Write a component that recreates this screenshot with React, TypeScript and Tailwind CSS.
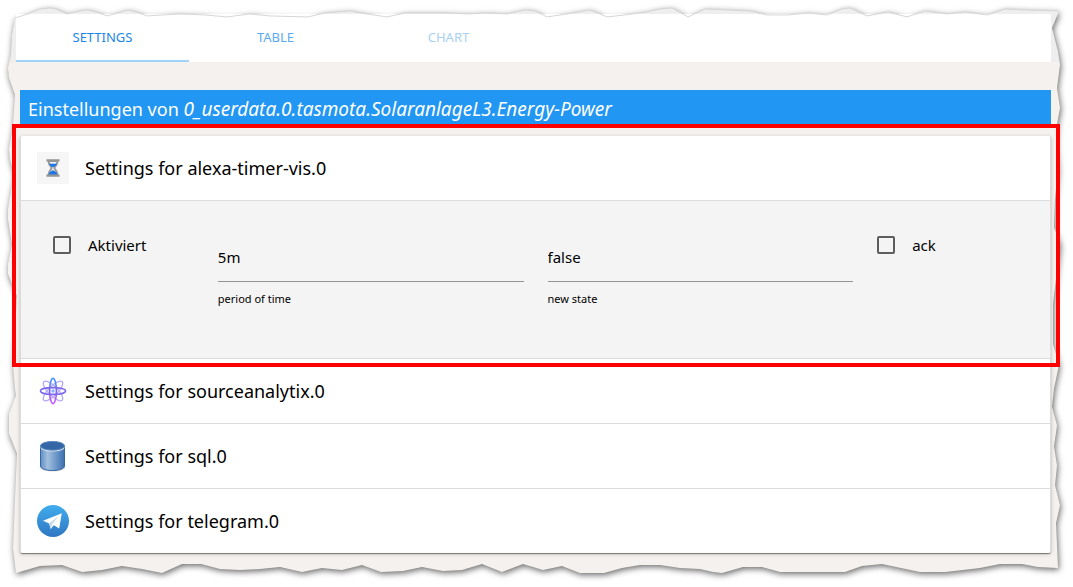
import React, { useState } from 'react';

const TOP_EDGE =
  '15,18 28,14 40,9 50,8 56,9 67,14 80,11 88,10 96,12 107,16 118,13 128,10 136,12 147,16 180,14 205,15 227,17 250,14 270,16 308,17 325,13 350,11 360,13 387,17 405,13 445,13 468,14 487,13 507,14 525,10 535,11 547,17 567,14 590,10 607,17 625,15 647,12 660,9 672,8 688,17 705,9 750,11 767,15 788,15 808,13 827,15 842,9 850,8 867,16 888,12 907,17 925,11 947,14 965,12 987,15 1005,9 1025,10 1059,11';
const RIGHT_EDGE =
  '1052,28 1058,52 1060,65 1057,88 1060,108 1057,125 1056,145 1058,170 1055,200 1054,228 1060,245 1056,280 1053,305 1053,345 1059,366 1054,390 1052,408 1057,427 1054,448 1057,467 1055,487 1060,507 1056,525 1058,570';
const BOTTOM_EDGE =
  '1038,569 1022,566 1000,566 980,570 945,574 920,574 882,566 862,568 845,574 780,574 762,569 743,569 722,575 713,574 700,571 680,570 660,567 640,567 622,570 604,575 580,575 562,568 543,572 523,566 502,574 482,566 462,572 443,573 422,569 403,573 381,574 362,567 342,572 322,570 302,574 280,569 260,571 240,572 220,571 201,566 182,566 162,575 142,571 122,568 102,572 82,574 62,567 40,568 16,575';
const LEFT_EDGE =
  '13,550 15,500 17,455 9,435 9,415 16,397 15,390 13,366 17,297 8,275 8,265 12,245 8,220 8,210 14,175 10,160 9,150 13,125 15,95 9,78 8,68 11,55 12,35';

function TornPaper() {
  return (
    <svg
      className="absolute inset-0 h-full w-full drop-shadow-[1px_2px_3px_rgba(0,0,0,0.6)]"
      viewBox="0 0 1073 587"
      preserveAspectRatio="none"
      aria-hidden="true"
    >
      <defs>
        <linearGradient id="paper" x1="0" y1="0" x2="0" y2="587" gradientUnits="userSpaceOnUse">
          <stop offset="0.1056" stopColor="#eeeeee" />
          <stop offset="0.1056" stopColor="#f5f1ee" />
        </linearGradient>
      </defs>
      <polygon
        points={`${TOP_EDGE} ${RIGHT_EDGE} ${BOTTOM_EDGE} ${LEFT_EDGE}`}
        fill="url(#paper)"
      />
    </svg>
  );
}

function TornTopEdge() {
  return (
    <svg
      className="pointer-events-none absolute inset-0 h-full w-full"
      viewBox="0 0 1073 587"
      preserveAspectRatio="none"
      aria-hidden="true"
    >
      <polyline points={TOP_EDGE} fill="none" stroke="#d6d6d6" />
    </svg>
  );
}

function HourglassIcon() {
  return (
    <svg viewBox="0 0 32 32" className="size-8 shrink-0" aria-hidden="true">
      <rect width="32" height="32" fill="#f6f6f6" />
      <path d="M11.5 9C11.5 13 14.5 14.5 14.5 16S11.5 19 11.5 23H20.5C20.5 19 17.5 17.5 17.5 16S20.5 13 20.5 9Z" fill="#e9eef5" stroke="#9a9a9a" strokeWidth="2" />
      <path d="M12 11.8H20C19.300 13.6 17.5 14.4 16 15.6C14.5 14.4 12.700 13.6 12 11.8Z" fill="#1b76e8" />
      <path d="M11.500 22.8C12 20 14 19.2 16 18.2C18 19.2 20 20 20.500 22.8Z" fill="#1b76e8" />
      <path d="M9.5 8.4H22.5M9.5 23.6H22.5" stroke="#949494" strokeWidth="2.2" />
    </svg>
  );
}

function AtomIcon() {
  return (
    <svg viewBox="0 0 32 32" className="size-8 shrink-0" fill="none" aria-hidden="true">
      <defs>
        <linearGradient id="atom" x1="0" y1="3" x2="0" y2="29" gradientUnits="userSpaceOnUse">
          <stop stopColor="#4a9dff" />
          <stop offset="0.5" stopColor="#7a62f0" />
          <stop offset="1" stopColor="#cf5cff" />
        </linearGradient>
      </defs>
      <g stroke="url(#atom)">
        <g opacity="0.55" strokeWidth="1.3">
          <ellipse cx="16" cy="16" rx="13" ry="4.600" transform="rotate(45 16 16)" />
          <ellipse cx="16" cy="16" rx="13" ry="4.600" transform="rotate(-45 16 16)" />
        </g>
        <ellipse cx="16" cy="16" rx="3.4" ry="12.6" strokeWidth="1.6" />
        <path
          d="M3.400 16C3.400 14 9 12.600 16 12.600S28.600 14 28.600 16S23 19.400 16 19.400S3.400 18 3.400 16Z"
          stroke="#7e68ef"
          strokeWidth="1.6"
        />
      </g>
      <circle cx="16" cy="16" r="1.8" fill="#8ab4ff" />
    </svg>
  );
}

function DatabaseIcon() {
  return (
    <svg viewBox="0 0 32 32" className="size-8 shrink-0" aria-hidden="true">
      <defs>
        <linearGradient id="cylinder">
          <stop stopColor="#5f8fc4" />
          <stop offset="0.3" stopColor="#a3bfde" />
          <stop offset="0.65" stopColor="#6c98c9" />
          <stop offset="1" stopColor="#3d70ad" />
        </linearGradient>
      </defs>
      <ellipse cx="15.5" cy="27.5" rx="13" ry="4" fill="#000000" opacity="0.12" />
      <path d="M3.5 6V26C3.5 28.5 8.5 30.5 15.5 30.5S27.5 28.5 27.5 26V6Z" fill="url(#cylinder)" stroke="#3567a5" />
      <path d="M3.8 6.5C4 9.5 9 11 15.5 11S27 9.5 27.2 6.5" fill="none" stroke="#dbe7f4" strokeWidth="1.2" />
      <ellipse cx="15.5" cy="5.8" rx="12" ry="4.3" fill="#3465a4" stroke="#5583bd" />
    </svg>
  );
}

function TelegramIcon() {
  return (
    <svg viewBox="0 0 32 32" className="size-8 shrink-0" aria-hidden="true">
      <defs>
        <linearGradient id="telegram" x1="0" y1="0" x2="0" y2="1">
          <stop stopColor="#41adee" />
          <stop offset="1" stopColor="#2f76c2" />
        </linearGradient>
      </defs>
      <circle cx="16" cy="16" r="16" fill="url(#telegram)" />
      <path d="M6 15.8L24.8 8.2L22.2 23.6L16.8 20.2L13.6 24L12.2 18.4Z" fill="#ffffff" />
      <path d="M12.2 18.2L21.5 11.2L15.2 19.3L13.6 24Z" fill="#c8daea" />
    </svg>
  );
}

interface Adapter {
  name: string;
  icon: () => React.JSX.Element;
}

const otherAdapters: Adapter[] = [
  { name: 'sourceanalytix.0', icon: AtomIcon },
  { name: 'sql.0', icon: DatabaseIcon },
  { name: 'telegram.0', icon: TelegramIcon },
];

function AdapterSummary({ name, icon: Icon, expanded = false }: Adapter & { expanded?: boolean }) {
  return (
    <button
      type="button"
      aria-expanded={expanded}
      className="flex h-16 w-full cursor-pointer items-center gap-4 px-4 text-left text-lg text-black"
    >
      <Icon />
      <span>Settings for {name}</span>
    </button>
  );
}

function CheckField({ label }: { label: string }) {
  return (
    <label className="flex h-6 items-center gap-[17px] px-3 text-[15px] text-black">
      <input
        type="checkbox"
        className="size-[18px] shrink-0 appearance-none rounded-xs border-2 border-[#5d5d5d] checked:bg-[#2196f3]"
      />
      <span>{label}</span>
    </label>
  );
}

function TextField({ id, label, initial }: { id: string; label: string; initial: string }) {
  const [value, setValue] = useState(initial);
  return (
    <div className="flex flex-col px-3 pt-2">
      <input
        id={id}
        value={value}
        onChange={e => setValue(e.target.value)}
        className="h-[49px] w-full border-b border-[#949494] bg-transparent text-[15px] text-black outline-none"
      />
      <label htmlFor={id} className="pt-2 text-[11px] leading-[18px] text-black">
        {label}
      </label>
    </div>
  );
}

const tabs = [
  { label: 'SETTINGS', className: 'text-[#1c86e8] border-[#9fd3fa]' },
  { label: 'TABLE', className: 'text-[#5aaaf0] border-transparent' },
  { label: 'CHART', className: 'text-[#a9d0f5] border-transparent' },
];

export default function App() {
  return (
    <div className="relative bg-white pt-3.5 pr-[22px] pb-8 pl-4 font-['Noto_Sans',sans-serif]">
      <TornPaper />
      <div className="relative">
        <nav className="flex h-12 bg-white" role="tablist">
          {tabs.map((tab, i) => (
            <button
              key={tab.label}
              type="button"
              role="tab"
              aria-selected={i === 0}
              className={`w-[173px] cursor-pointer border-b-2 pt-0.5 text-[13px] ${tab.className}`}
            >
              {tab.label}
            </button>
          ))}
        </nav>

        <main className="pt-7 pl-1">
          <h1 className="h-[38px] bg-[#2196f3] px-2 text-lg leading-[38px] text-white">
            Einstellungen von{' '}
            <em className="text-[19px]">0_userdata.0.tasmota.SolaranlageL3.Energy-Power</em>
          </h1>

          <div className="mt-2 rounded-xs border-x border-[#dcdcdc] bg-white shadow-[0_2px_1px_-1px_rgba(0,0,0,0.3),0_1px_1px_0_rgba(0,0,0,0.2),0_1px_4px_0_rgba(0,0,0,0.2)]">
            <section className="relative border-b border-[#dcdcdc]">
              <AdapterSummary name="alexa-timer-vis.0" icon={HourglassIcon} expanded />
              <div className="grid grid-cols-[1fr_2fr_2fr_1fr] border-t border-[#dcdcdc] bg-[#f4f4f4] px-5 pt-6 pb-[50px]">
                <div className="pt-2">
                  <CheckField label="Aktiviert" />
                </div>
                <TextField id="period" label="period of time" initial="5m" />
                <TextField id="state" label="new state" initial="false" />
                <div className="pt-2">
                  <CheckField label="ack" />
                </div>
              </div>
              <div className="pointer-events-none absolute -top-3 -right-2.5 -bottom-[9px] -left-[9px] z-10 border-4 border-[#ff0000]" />
            </section>

            <div className="divide-y divide-[#dcdcdc]">
              {otherAdapters.map(adapter => (
                <section key={adapter.name}>
                  <AdapterSummary {...adapter} />
                </section>
              ))}
            </div>
          </div>
        </main>
      </div>
      <TornTopEdge />
    </div>
  );
}
